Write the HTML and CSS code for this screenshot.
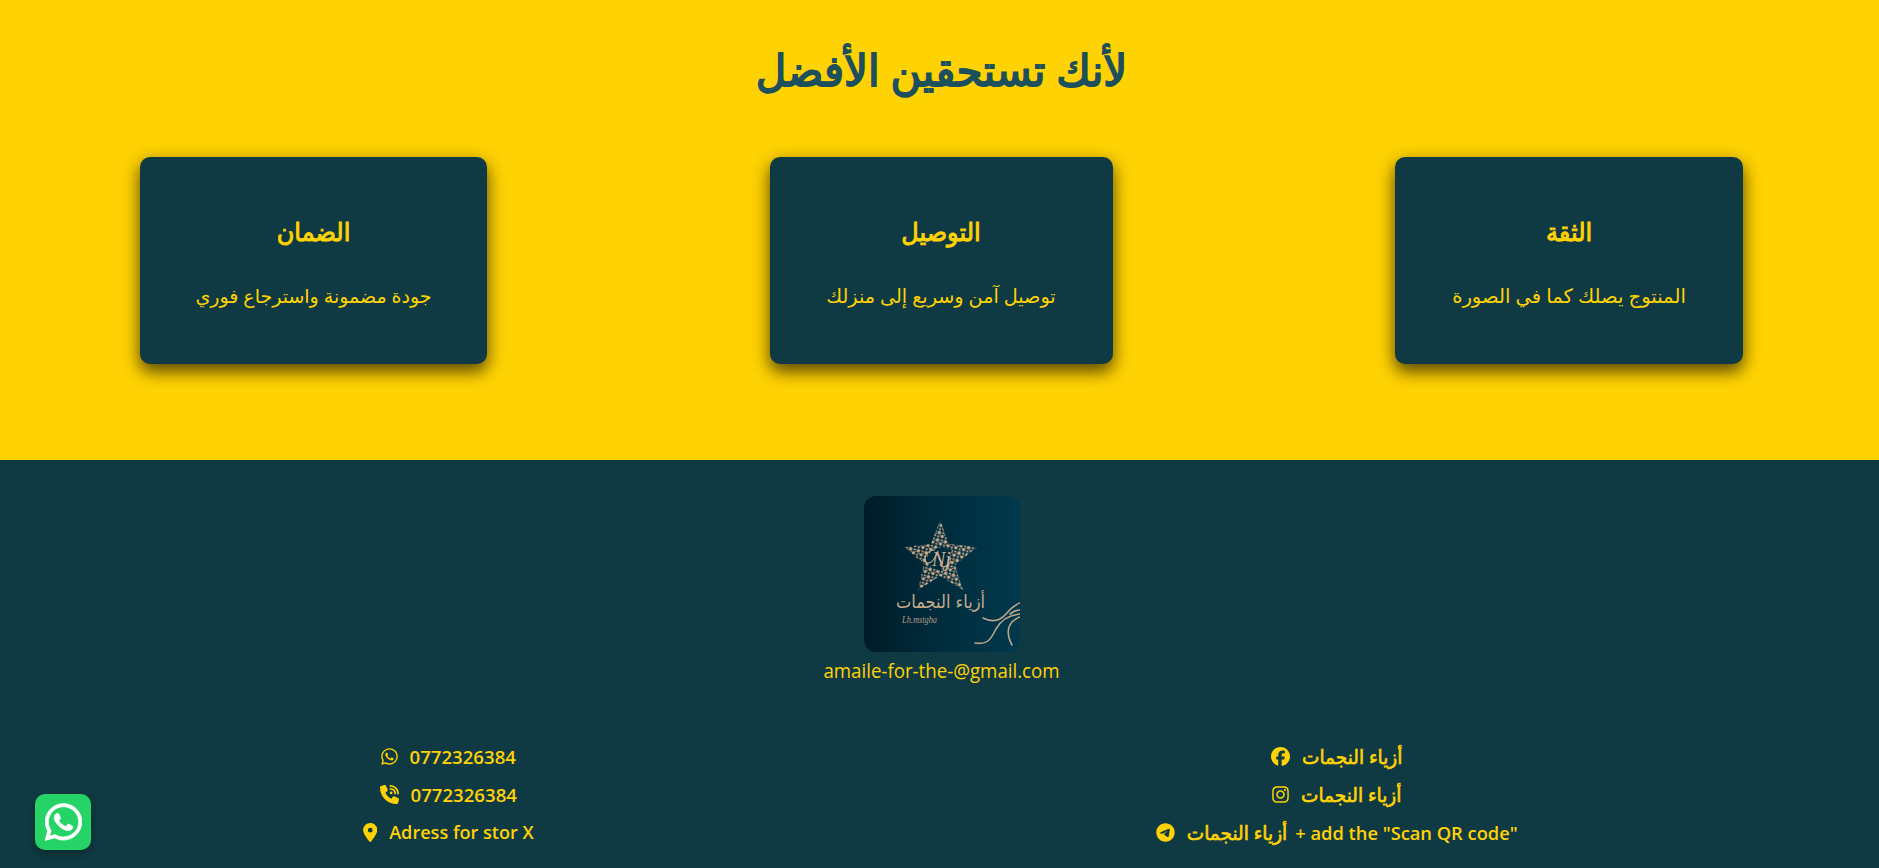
FILE: index.html
```
<!DOCTYPE html>
<html lang="ar">
<head>
<meta charset="utf-8">
<title>أزياء النجمات</title>
<link rel="stylesheet" href="styles.css">
</head>
<body>
<svg class="defs" width="0" height="0">
  <symbol id="whatsapp" viewBox="0 0 448 512"><path d="M380.9 97.1C339 55.1 283.2 32 223.9 32c-122.4 0-222 99.6-222 222 0 39.1 10.2 77.3 29.6 111L0 480l117.7-30.9c32.4 17.7 68.9 27 106.1 27h.1c122.3 0 224.1-99.6 224.1-222 0-59.3-25.2-115-67.1-157zm-157 341.6c-33.2 0-65.7-8.9-94-25.7l-6.7-4-69.8 18.3L72 359.2l-4.4-7c-18.5-29.4-28.2-63.3-28.2-98.2 0-101.7 82.8-184.5 184.6-184.5 49.3 0 95.6 19.2 130.4 54.1 34.8 34.9 56.2 81.2 56.1 130.5 0 101.8-84.9 184.6-186.6 184.6zm101.2-138.2c-5.5-2.8-32.8-16.2-37.9-18-5.1-1.9-8.8-2.8-12.5 2.8-3.7 5.6-14.3 18-17.6 21.8-3.2 3.7-6.5 4.2-12 1.4-32.6-16.3-54-29.1-75.5-66-5.7-9.8 5.7-9.1 16.3-30.3 1.8-3.7.9-6.9-.5-9.7-1.4-2.8-12.5-30.1-17.1-41.2-4.5-10.8-9.1-9.3-12.5-9.5-3.2-.2-6.9-.2-10.6-.2-3.7 0-9.7 1.4-14.8 6.9-5.1 5.6-19.4 19-19.4 46.3 0 27.3 19.9 53.7 22.6 57.4 2.8 3.7 39.1 59.7 94.8 83.8 35.2 15.2 49 16.5 66.6 13.9 10.7-1.6 32.8-13.4 37.4-26.4 4.6-13 4.6-24.1 3.2-26.4-1.3-2.5-5-3.9-10.5-6.6z"/></symbol>
</svg>
<section class="features">
  <h1 class="title" dir="rtl"><span class="t t-title">لأنك تستحقين الأفضل</span></h1>
  <div class="cards">
    <article class="card card-a"><h2 dir="rtl"><span class="t t-h">الضمان</span></h2><p dir="rtl"><span class="t t-a">جودة مضمونة واسترجاع فوري</span></p></article>
    <article class="card card-b"><h2 dir="rtl"><span class="t t-h">التوصيل</span></h2><p dir="rtl"><span class="t t-b">توصيل آمن وسريع إلى منزلك</span></p></article>
    <article class="card card-c"><h2 dir="rtl"><span class="t t-h">الثقة</span></h2><p dir="rtl"><span class="t t-c">المنتوج يصلك كما في الصورة</span></p></article>
  </div>
</section>
<footer class="footer">
  <svg class="logo" viewBox="0 0 156 156">
    <defs>
      <linearGradient id="bg"><stop offset="0" stop-color="#001b27"/><stop offset=".5" stop-color="#002d3e"/><stop offset="1" stop-color="#00394c"/></linearGradient>
      <pattern id="dots" width="8" height="7.6" patternUnits="userSpaceOnUse" patternTransform="rotate(14)">
        <g fill="#d3b08e"><circle cx="2" cy="2" r="1.8"/><circle cx="6.1" cy="1.5" r="1.1"/><circle cx="5.7" cy="5.2" r="1.6"/><circle cx="1.7" cy="6" r="1.1"/><circle cx="7.6" cy="3.4" r=".6"/><circle cx="3.6" cy="4.1" r=".5"/></g>
      </pattern>
    </defs>
    <rect width="156" height="156" fill="url(#bg)"/>
    <path fill="url(#dots)" d="M76 24l9 24 28 3-22 18 8 25-23-14-22 14 6-26-20-17 27-3z"/>
    <path d="M62 65c2-9 9-13 16-14l10 3-4 13-8 8-9-4z" fill="#002c3c"/>
    <text class="mono" x="68" y="70">Nj</text>
    <path class="line" d="M71 54c-8 0-13 9-8 13 5 1 8-5 11-12m2 13c2 5 8 3 11-3"/>
    <text class="brand" x="76.500" y="112" direction="rtl" text-anchor="middle" textLength="89" lengthAdjust="spacingAndGlyphs">أزياء النجمات</text>
    <text class="sign" x="38" y="127" textLength="35" lengthAdjust="spacingAndGlyphs">Lh.mstgha</text>
    <path class="swash" d="M119 122c10 5 17 3 23-4 5-6 8-9 14-11M111 147c13 2 16-4 21-14 5-9 12-14 24-15M156 121c-12 4-15 15-8 28M146 118c4-3 7-4 10-4"/>
  </svg>
  <a class="mail"><span class="t t-mail">amaile-for-the-@gmail.com</span></a>
  <div class="contacts">
    <div class="col">
      <a class="row r1"><svg class="i w448"><use href="#whatsapp"/></svg><span class="t num">0772326384</span></a>
      <a class="row r2"><svg class="i w512" viewBox="0 0 512 512"><path d="M164.9 24.6c-7.7-18.6-28-28.5-47.4-23.2l-88 24C12.1 30.2 0 46 0 64C0 311.4 200.6 512 448 512c18 0 33.8-12.1 38.6-29.5l24-88c5.3-19.4-4.6-39.7-23.2-47.4l-96-40c-16.3-6.8-35.2-2.1-46.3 11.6L304.7 368C234.3 334.7 177.3 277.7 144 207.3L193.3 167c13.7-11.2 18.4-30 11.6-46.3l-40-96z"/><g fill="none" stroke="currentColor" stroke-width="48" stroke-linecap="round"><path d="M280 24a208 208 0 0 1 208 208M280 104a128 128 0 0 1 128 128"/></g><circle cx="300" cy="212" r="38"/></svg><span class="t num">0772326384</span></a>
      <a class="row r3"><svg class="i w384" viewBox="0 0 384 512"><path d="M215.7 499.2C267 435 384 279.4 384 192C384 86 298 0 192 0S0 86 0 192c0 87.4 117 243 168.3 307.2c12.3 15.3 35.1 15.3 47.4 0zM192 128a64 64 0 1 1 0 128 64 64 0 1 1 0-128z"/></svg><span class="t adr">Adress for stor X</span></a>
    </div>
    <div class="col">
      <a class="row r4"><svg class="i w512" viewBox="0 0 512 512"><path d="M512 256C512 114.6 397.4 0 256 0S0 114.6 0 256C0 376 82.7 476.8 194.2 504.5V334.2H141.4V256h52.8V222.3c0-87.1 39.4-127.5 125-127.5 16.2 0 44.2 3.2 55.7 6.4V172c-6-.6-16.5-1-29.6-1-42 0-58.2 15.9-58.2 57.2V256h83.6l-14.4 78.2H287V510.1C413.8 494.8 512 386.9 512 256z"/></svg><span class="t ar" dir="rtl">أزياء النجمات</span></a>
      <a class="row r5"><svg class="i w448" viewBox="0 0 448 512"><path d="M224.1 141c-63.6 0-114.9 51.3-114.9 114.9s51.3 114.9 114.9 114.9S339 319.5 339 255.9 287.7 141 224.1 141zm0 189.6c-41.1 0-74.7-33.5-74.7-74.7s33.5-74.7 74.7-74.7 74.7 33.5 74.7 74.7-33.6 74.7-74.7 74.7zm146.4-194.3c0 14.9-12 26.8-26.8 26.8-14.9 0-26.8-12-26.8-26.8s12-26.8 26.8-26.8 26.8 12 26.8 26.8zm76.1 27.2c-1.7-35.9-9.9-67.7-36.2-93.9-26.2-26.2-58-34.4-93.9-36.2-37-2.1-147.9-2.1-184.9 0-35.8 1.7-67.6 9.9-93.9 36.1s-34.4 58-36.2 93.9c-2.1 37-2.1 147.9 0 184.9 1.7 35.9 9.9 67.7 36.2 93.9s58 34.4 93.9 36.2c37 2.1 147.9 2.1 184.9 0 35.9-1.7 67.7-9.9 93.9-36.2 26.2-26.2 34.4-58 36.2-93.9 2.1-37 2.1-147.8 0-184.8zM398.8 388c-7.8 19.6-22.9 34.7-42.6 42.6-29.5 11.7-99.5 9-132.1 9s-102.7 2.6-132.1-9c-19.6-7.8-34.7-22.9-42.6-42.6-11.7-29.5-9-99.5-9-132.1s-2.6-102.7 9-132.1c7.8-19.6 22.9-34.7 42.6-42.6 29.5-11.7 99.5-9 132.1-9s102.7-2.6 132.1 9c19.6 7.8 34.7 22.9 42.6 42.6 11.7 29.5 9 99.5 9 132.1s2.7 102.7-9 132.1z"/></svg><span class="t ar" dir="rtl">أزياء النجمات</span></a>
      <a class="row r6"><svg class="i w512" viewBox="0 0 496 512"><path d="M248 8C111 8 0 119 0 256S111 504 248 504 496 393 496 256 385 8 248 8zM363 176.7c-3.7 39.2-19.9 134.4-28.1 178.3-3.5 18.6-10.3 24.8-16.9 25.4-14.4 1.3-25.3-9.5-39.3-18.7-21.8-14.3-34.2-23.2-55.3-37.2-24.5-16.1-8.6-25 5.3-39.5 3.7-3.8 67.1-61.5 68.3-66.7.2-.7.3-3.1-1.2-4.4s-3.6-.8-5.1-.5q-3.3.7-104.6 69.1-14.8 10.2-26.9 9.9c-8.9-.2-25.9-5-38.6-9.1-15.5-5-27.9-7.7-26.8-16.3q.8-6.7 18.5-13.7 108.4-47.2 144.6-62.3c68.9-28.6 83.2-33.6 92.5-33.8 2.1 0 6.6.5 9.6 2.9a10.5 10.5 0 0 1 3.5 6.7A43.8 43.8 0 0 1 363 176.7z"/></svg><span class="t ar" dir="rtl">أزياء النجمات</span><span class="t qr">+ add the "Scan QR code"</span></a>
    </div>
  </div>
</footer>
<a class="float"><svg class="float-icon"><use href="#whatsapp"/></svg></a>
</body>
</html>
```
FILE: styles.css
```
* { box-sizing: border-box; }
body { margin: 0; height: 868px; overflow: hidden; background: #103a43; color: #ffd203; font-family: "Open Sans", "Noto Sans", "DejaVu Sans", sans-serif; }
.defs { position: absolute; }
h1, h2, p { margin: 0; }
.t { display: inline-block; white-space: nowrap; }
.features { height: 460px; background: #ffd203; padding: 38px 136px 0 140px; }
.title { height: 119px; line-height: 64px; text-align: center; color: #1d4f5c; font-size: 42px; font-weight: 400; -webkit-text-stroke: 1.7px; }
.t-title { transform: scaleY(1.03); }
.cards { display: flex; justify-content: space-between; }
.card { height: 207px; padding-top: 56px; border-radius: 10px; background: #103a43; text-align: center; box-shadow: 0 8px 16px rgba(0, 0, 0, .55), 0 4px 20px rgba(0, 0, 0, .2); }
.card-a { width: 347px; }
.card-b { width: 343px; }
.card-c { width: 348px; }
.card h2 { height: 64px; line-height: 36px; font-size: 24px; font-weight: 400; -webkit-text-stroke: .9px; }
.t-h { transform: scaleY(1.06); }
.card p { line-height: 38px; font-size: 19px; }
.t-b { font-size: 19.2px; }
.t-c { font-size: 19.6px; }
.footer { height: 408px; padding-top: 36px; display: flex; flex-direction: column; align-items: center; }
.logo { width: 156px; height: 156px; border-radius: 12px; display: block; margin-left: 5px; flex: none; }
.mono { font: italic 20px "Liberation Serif", serif; fill: #d3b08e; }
.brand { font: 18px "DejaVu Sans", sans-serif; fill: #c8ab8c; }
.sign { font: italic 10px "Liberation Serif", serif; fill: #b39d84; }
.line { fill: none; stroke: #d3b08e; stroke-width: 1.1; }
.swash { fill: none; stroke: #bda68c; stroke-width: 1.6; stroke-linecap: round; }
.mail { height: 40px; line-height: 38px; font-size: 18.7px; margin-left: 4px; }
.t-mail { transform: scaleY(1.06); }
.contacts { width: 1777px; margin: 45px 98px 0 4px; display: grid; grid-template-columns: 1fr 1fr; align-self: flex-start; }
.row { height: 38px; display: flex; align-items: center; justify-content: center; gap: 12px; font-size: 18.6px; font-weight: 600; }
.i { height: 19px; fill: currentColor; flex: none; }
.w384 { width: 14.5px; }
.w448 { width: 17px; }
.w512 { width: 19px; }
.adr { font-size: 18.1px; }
.ar { font-size: 18.5px; font-weight: 400; -webkit-text-stroke: .6px; transform: scaleY(1.05); }
.qr { font-size: 18.3px; margin-left: -4px; }
.float { position: absolute; left: 35px; top: 794px; width: 56px; height: 56px; border-radius: 10px; background: #25d366; color: #fff; display: flex; align-items: center; justify-content: center; box-shadow: 0 4px 10px rgba(0, 0, 0, .3); }
.float-icon { width: 37px; height: 42px; fill: currentColor; stroke: currentColor; stroke-width: 10px; }
```
